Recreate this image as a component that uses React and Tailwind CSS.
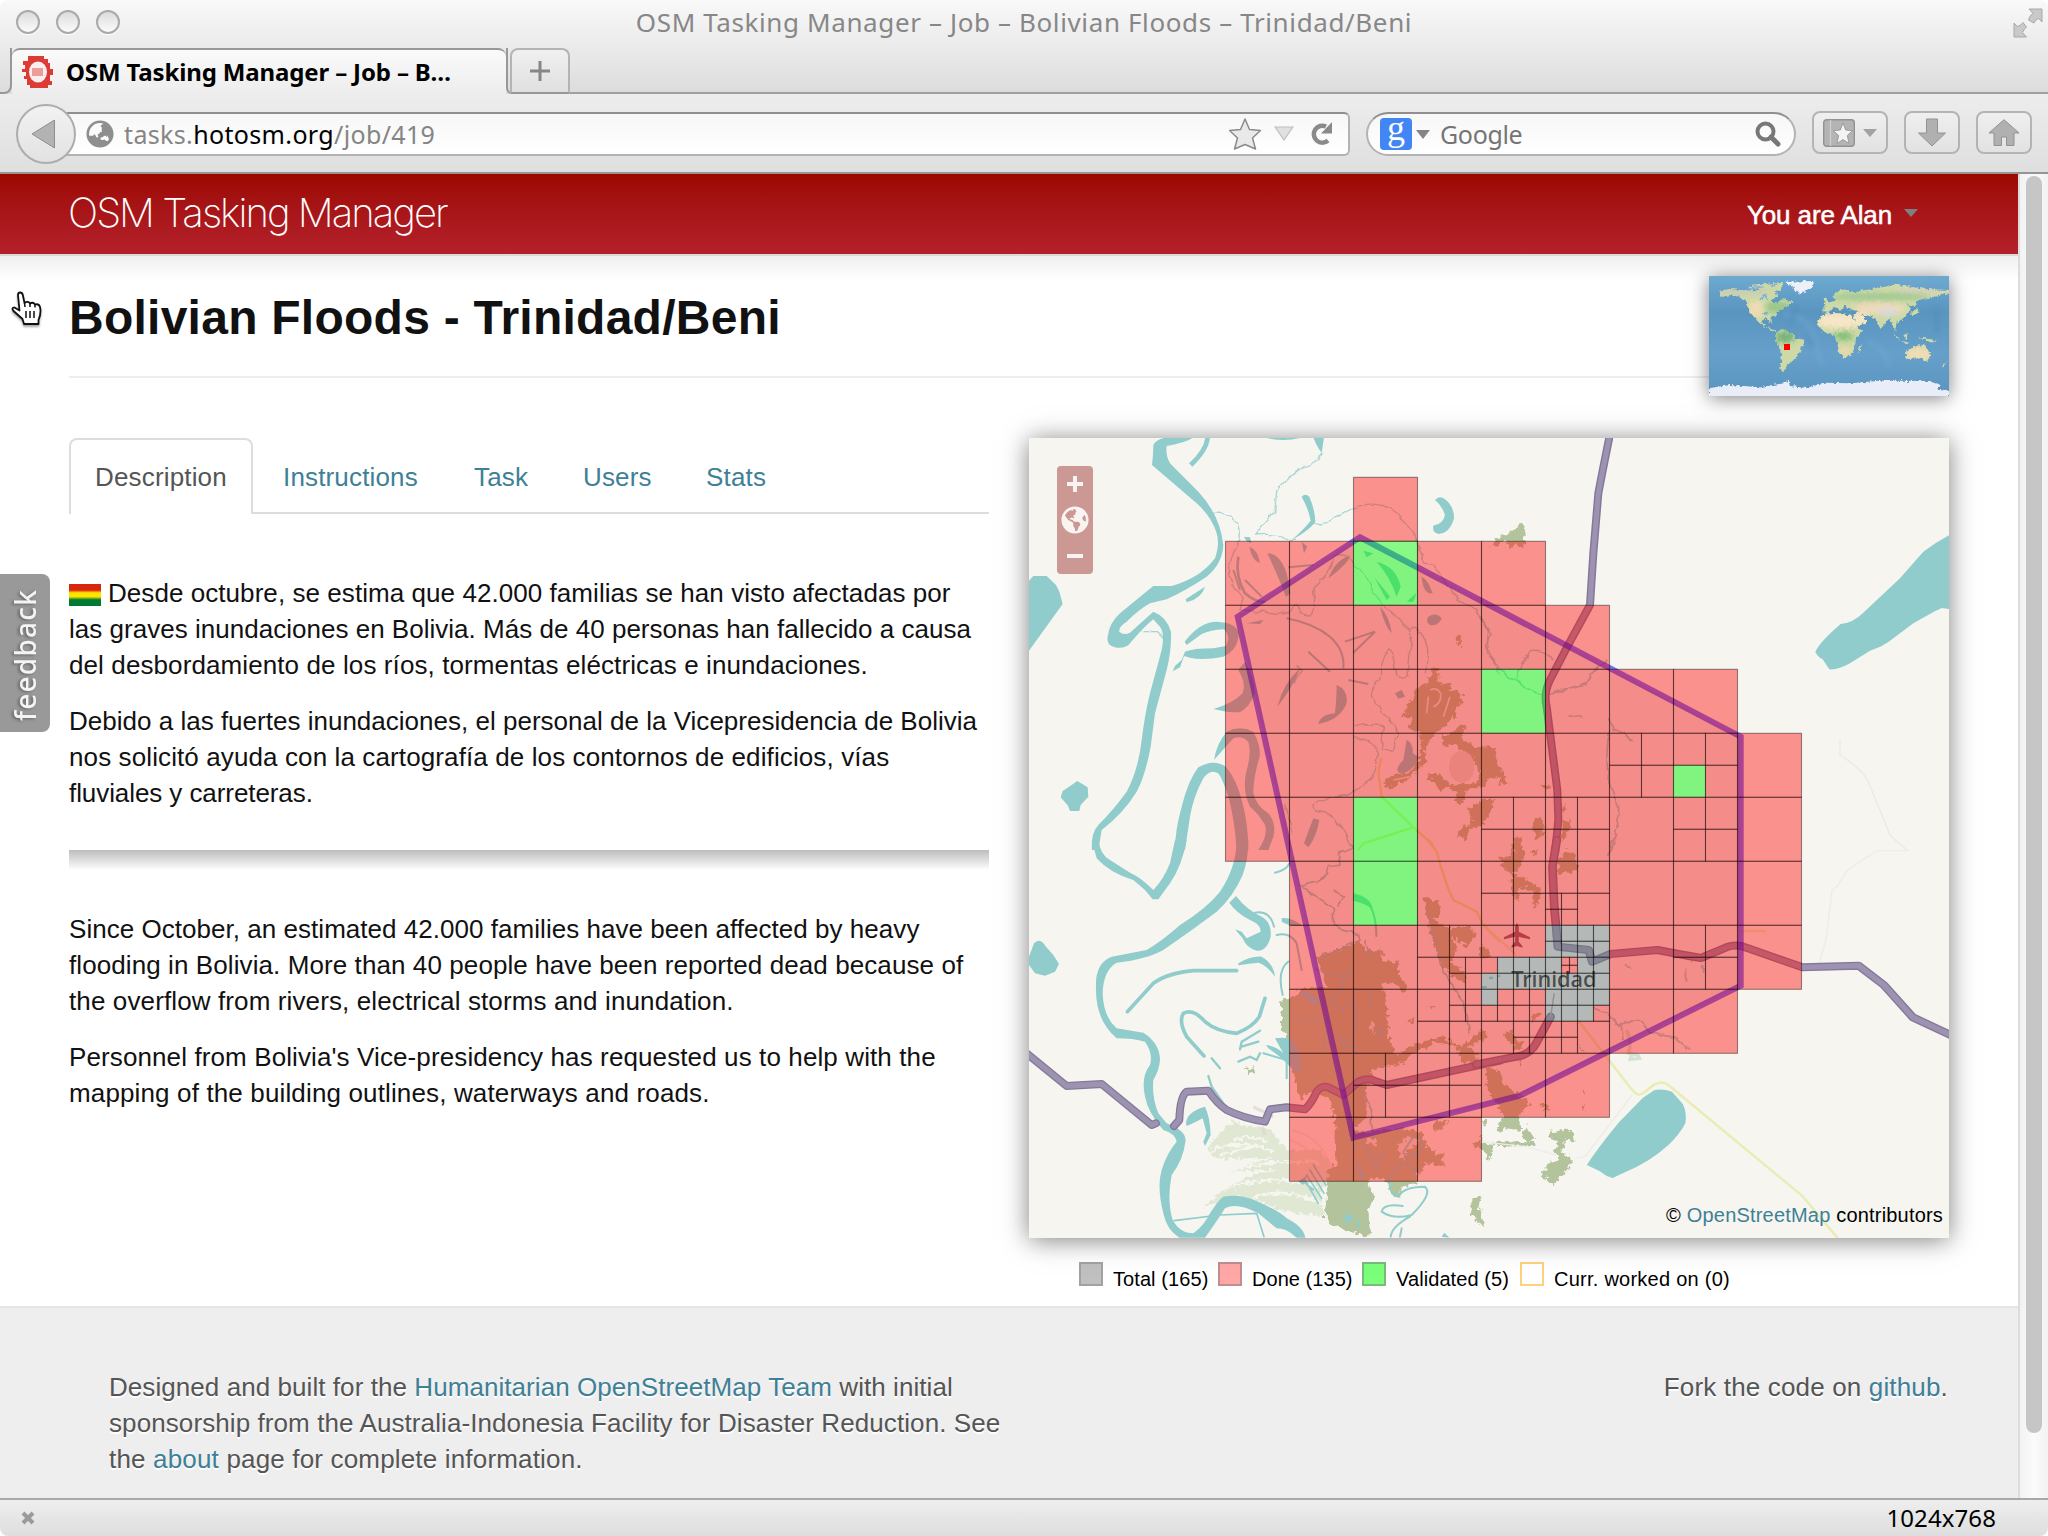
import React from "react";
import { FaGlobeAmericas, FaGlobeAsia } from "react-icons/fa";

const WATER = "#8fcccb";
const WOOD = "#b3c39c";
const ROAD = "#9d93b0";
const ROAD_EDGE = "#83799c";

/* ---------- task grid ---------- */
const X0 = 1225.5;
const Y0 = 477.3;
// each row: [first column, last column]
const ROWS = [[2, 2], [0, 4], [0, 5], [0, 7], [0, 8], [0, 8], [1, 8], [1, 8], [1, 7], [1, 5], [1, 3]];

// a cell is a state letter, or a list of four cells: upper left, upper right, lower left, lower right
const D = "d";
const V = "v";
const T = "t";
const Q = [D, D, D, D];
const G = [T, T, T, T];
const SPECIAL = {
  "1,2": V,
  "3,4": V,
  "4,6": Q,
  "4,7": [D, D, V, D],
  "5,2": V,
  "5,4": Q,
  "5,5": Q,
  "5,7": Q,
  "6,2": V,
  "6,4": Q,
  "6,5": [D, D, Q, D],
  "7,3": [D, D, D, Q],
  "7,4": [D, D, [D, T, T, T], G],
  "7,5": [G, G, [T, Q, T, T], G],
  "7,7": Q,
  "8,3": [D, Q, D, D],
  "8,4": [[T, D, D, D], Q, D, Q],
  "8,5": [G, [T, T, T, D], Q, D],
  "9,2": Q,
  "9,3": Q,
};

function split(cell, x, y, size, out) {
  if (typeof cell === "string") {
    out.push({ x, y, size, state: cell });
    return;
  }
  const h = size / 2;
  split(cell[0], x, y, h, out);
  split(cell[1], x + h, y, h, out);
  split(cell[2], x, y + h, h, out);
  split(cell[3], x + h, y + h, h, out);
}

const CELLS = [];
ROWS.forEach(([a, b], r) => {
  for (let c = a; c <= b; c++) split(SPECIAL[`${r},${c}`] || D, X0 + c * 64, Y0 + r * 64, 64, CELLS);
});

const FILL = {
  d: "rgba(255,8,5,0.42)",
  v: "rgba(0,255,0,0.45)",
  t: "rgba(113,123,121,0.45)",
};

const Road = ({ d, w = 20 }) => (
  <>
    <path d={d} fill="none" stroke={ROAD_EDGE} strokeWidth={w} strokeLinejoin="round" strokeLinecap="round" />
    <path d={d} fill="none" stroke={ROAD} strokeWidth={w - 8} strokeLinejoin="round" strokeLinecap="round" />
  </>
);

function NorthWest() {
  return (
    <g transform="translate(1020 430) scale(0.33333)">
      <g fill={WATER}>
        <path d="M27 452 L40 438 H80 L108 465 L118 485 L128 522 L27 662Z" />
        <path d="M172 1053 L203 1072 L205 1100 L182 1125 L178 1143 H150 L144 1127 L122 1102 L128 1083 L145 1072Z" />
        <path d="M400 45 Q408 28 440 22 H520 Q500 38 440 48 Q436 75 450 100 L535 185 Q600 255 610 345 Q608 400 560 440 Q500 480 440 508 L390 520 Q355 540 320 575 Q295 590 298 605 Q310 618 330 608 L400 545 Q440 560 453 605 Q455 660 440 720 L405 850 L392 950 Q375 1040 350 1085 Q310 1150 245 1200 L235 1260 H216 Q212 1210 235 1185 Q280 1140 320 1085 Q355 1020 365 930 Q375 850 390 790 L425 660 Q435 610 420 590 L400 568 Q372 590 330 640 Q320 655 290 653 Q255 648 264 615 Q268 580 300 550 L400 468 H455 Q540 445 585 385 Q600 340 590 310 Q575 260 530 220 L396 105 Q400 70 400 45Z" />
        <path d="M732 22 H848 Q790 38 732 22Z M880 22 H912 L905 68 Q890 50 880 22Z" />
        <path d="M845 200 Q855 188 868 200 Q885 240 886 275 Q870 300 815 330 Q850 300 872 272 Q865 235 845 200Z" />
        <path d="M1245 210 Q1258 195 1275 208 Q1303 230 1302 265 Q1290 310 1255 312 L1242 305 Q1235 285 1245 285 Q1270 280 1275 255 Q1265 225 1245 210Z" />
        <path d="M497 508 L555 470 Q545 505 500 517Z M494 635 Q540 575 590 575 Q650 578 656 610 Q655 660 610 680 Q550 692 510 683 L492 678 L480 712 L458 724 L465 708 L485 690 L495 665 Q520 655 580 655 L618 648 Q635 620 612 598 Q570 600 545 612 L500 645Z" />
        <path d="M580 837 Q640 820 668 790 Q680 760 655 720 L675 695 Q705 750 705 790 Q690 830 660 847 Q620 848 580 837Z" />
        <path d="M582 990 Q590 940 620 905 Q660 885 700 905 Q725 950 718 985 Q700 1040 700 1090 Q710 1130 745 1150 Q770 1180 760 1220 L745 1260 H715 Q745 1215 735 1185 Q715 1150 690 1130 Q665 1080 680 1020 Q695 970 685 935 Q665 915 640 925Z" />
        <path d="M465 1260 Q465 1200 485 1130 Q505 1050 535 1012 Q580 985 618 1010 Q650 1050 665 1110 Q685 1180 685 1260 H650 Q645 1180 628 1110 Q610 1050 595 1030 Q570 1015 550 1045 Q520 1100 510 1160 L495 1260Z" />
        <path d="M672 320 L690 322 L694 340 L680 334Z M742 370 Q780 370 800 430 L812 490 L798 500 Q775 440 742 370Z M845 335 L862 350 L852 370Z M950 765 Q985 780 980 820 Q960 870 895 882 Q900 855 945 850 Q950 800 950 765Z" />
        <path d="M1160 930 Q1180 940 1178 970 L1195 980 Q1180 1030 1140 1030 Q1120 1020 1150 990Z M880 1165 L898 1170 Q890 1220 865 1252 L852 1240Z M1225 560 Q1250 545 1265 565 Q1255 590 1230 585 Q1215 575 1225 560Z M1205 440 Q1225 450 1238 490 Q1210 495 1205 440Z M1125 790 L1145 780 L1155 800 L1135 806Z M1030 362 L1060 370 L1040 382Z M1070 395 Q1130 410 1142 470 L1130 500 Q1110 440 1070 395Z M1062 440 L1110 500 L1100 510Z M1160 515 L1190 488 L1180 515Z" />
        <path d="M688 350 Q715 360 720 400 Q695 390 688 350Z M925 445 Q950 385 990 378 Q985 400 925 445Z M772 830 Q790 760 840 715 Q820 770 772 830Z M680 580 L730 570 L720 582Z M1080 530 Q1110 560 1115 610 Q1095 590 1080 530Z" />
      </g>
      <g fill="none" stroke={WATER} strokeWidth="8">
        <path d="M563 22 Q560 60 512 105" strokeWidth="14" />
        <path d="M655 380 Q645 440 675 490 Q710 520 735 515" />
        <path d="M675 450 L725 500 M640 420 L660 480" strokeWidth="6" />
        <path d="M805 412 L880 405 M800 565 Q880 580 930 620 Q975 660 970 715 M865 665 L930 725 M975 635 L1065 605 L1000 668 M985 750 L1045 762" strokeWidth="6" />
      </g>
      <g fill="none" stroke={WATER} strokeWidth="4" opacity="0.75" filter="url(#wander)">
        <path d="M905 68 Q890 100 850 110 Q790 150 770 185 L765 240 L705 315 Q770 308 795 328 L830 328" />
        <path d="M578 250 Q640 245 655 290 Q665 330 640 370 Q615 430 645 480 L670 500 L660 540 L740 545 Q800 560 830 525 Q850 560 870 560 Q890 530 880 480 L930 420 L945 375 Q990 370 1000 400 Q1040 430 1060 490 Q1100 540 1140 570 Q1180 610 1175 640 Q1160 690 1165 735 Q1140 760 1125 720 Q1120 660 1105 660 Q1080 690 1085 740 Q1050 780 1055 800 Q1090 850 1110 870 L1135 910 L1120 965 L1085 955 L1090 895 L1075 885 L1000 885" />
        <path d="M880 280 L905 285 L1000 235 Q1060 205 1130 245 L1180 310 L1215 400 Q1250 400 1270 450 L1320 515 L1370 540 Q1385 580 1405 600 L1400 660 L1440 730" />
        <path d="M365 605 H410 L432 628 M1165 600 Q1190 580 1215 630 Q1235 680 1215 730 M1000 920 Q1060 930 1075 970 Q1070 1030 1050 1050 L985 1095 L900 1110 Q870 1125 890 1140 Q940 1150 970 1200 L1000 1255 M830 710 L845 720 L820 760 M790 1120 Q820 1170 810 1210" />
      </g>
      <g fill={WOOD} filter="url(#rough)">
        <path d="M1240 710 L1255 715 L1255 755 L1295 765 L1290 780 L1320 785 L1330 815 L1310 835 Q1300 870 1270 895 L1240 915 L1215 960 L1220 1000 L1190 1020 L1165 1050 L1130 1065 L1110 1078 L1085 1065 L1105 1040 L1165 1030 L1195 990 L1205 960 L1200 910 L1165 895 L1180 860 L1145 865 L1170 815 L1185 780 L1225 755Z" />
        <path d="M1325 880 L1335 895 L1320 925 L1370 950 L1425 955 L1430 990 L1440 1040 L1400 1050 L1390 1070 L1330 1085 L1335 1110 L1320 1125 L1305 1115 L1310 1085 L1285 1070 L1260 1080 L1240 1050 L1215 1050 L1225 1030 L1250 1030 L1290 1060 Q1345 1070 1375 1050 Q1385 1010 1350 980 L1305 945 L1268 950 L1265 915 L1290 915Z" />
        <path d="M1310 620 L1322 618 L1322 650 L1314 650Z M1345 1140 L1375 1120 L1420 1105 L1410 1150 L1385 1155 L1390 1185 L1350 1190 L1340 1230 L1310 1215 L1330 1190 L1360 1180Z" />
      </g>
      <ellipse cx="1325" cy="1010" rx="38" ry="48" fill="#e6e4dc" />
      <g fill="none" stroke="#f0eee4" strokeWidth="5">
        <path d="M1230 780 Q1250 770 1262 790 Q1265 820 1240 830 M1225 800 L1220 850 M1290 800 L1270 860 M1120 1050 L1170 1040" />
      </g>
      <path d="M1085 985 Q1070 1020 1080 1060 L1085 1100 L1180 1192 L1240 1245 M1180 1192 L1030 1240 L1015 1260" fill="none" stroke="#e9e9a0" strokeWidth="7" />
    </g>
  );
}

function NorthEast() {
  return (
    <g transform="translate(1480 430) scale(0.33333)">
      <path fill={WATER} d="M1410 314 Q1370 335 1330 365 L1260 445 L1150 548 Q1120 578 1082 582 Q1020 635 1006 665 Q1012 680 1028 688 L1048 718 Q1075 720 1110 700 L1170 662 Q1210 650 1240 625 L1300 580 Q1370 540 1385 534 L1410 537Z" />
      <g fill="none" stroke={WATER} strokeWidth="5" opacity="0.8" filter="url(#wander)">
        <path d="M0 560 L30 610 L20 650 L45 700 L85 745 L110 750 L140 775 L185 795 L230 785 L320 760 L335 730 L385 690 M110 745 Q115 710 155 662 Q190 655 220 690 M265 858 H308 M388 865 L400 900 L430 910 L455 930 M390 900 Q375 960 385 1040 L415 1130 Q420 1170 395 1260" />
      </g>
      <g fill={WOOD} filter="url(#rough)">
        <path d="M30 352 L45 330 L65 315 L90 310 L110 290 L130 282 L138 300 L130 330 L135 352 L110 345 L95 350 L75 335 L45 350Z" />
        <path d="M0 960 L35 950 L50 975 L45 1000 L75 1030 L85 1060 L55 1065 L60 1045 L35 1020 L20 1055 L0 1050Z M0 1110 L45 1105 L30 1130 L25 1165 L0 1180Z M160 1165 H188 V1220 L170 1230 L158 1200Z M245 1180 L272 1170 L262 1210 L245 1235Z M95 1260 L100 1230 L125 1220 L120 1260Z M175 1060 L215 1068 L200 1078Z M240 1130 L258 1120 L250 1150Z" />
      </g>
      <path d="M1080 930 V975 Q1150 1020 1165 1055 L1230 1215 L1280 1260" fill="none" stroke="#ebebe6" strokeWidth="4" />
      <path d="M388 22 Q370 110 355 190 L340 370 L330 525 L262 650 L210 750 Q190 790 200 830 L232 1080 L235 1170 L225 1270" fill="none" stroke={ROAD_EDGE} strokeWidth="24" />
      <path d="M388 22 Q370 110 355 190 L340 370 L330 525 L262 650 L210 750 Q190 790 200 830 L232 1080 L235 1170 L225 1270" fill="none" stroke={ROAD} strokeWidth="15" />
    </g>
  );
}

function SouthWest() {
  return (
    <g transform="translate(1020 840) scale(0.33333)">
      <g filter="url(#rough)">
        <path fill="#e0e8d3" d="M560 930 Q590 880 640 840 Q680 870 740 860 L770 890 L800 930 H905 L940 990 L900 1060 L912 1130 L780 1110 L700 1075 L640 1070 L550 1100 L600 1060 L680 1010 L780 985 L620 1000 L660 980 L760 955 L590 955Z" />
        <path fill="none" stroke="#f6f5f0" strokeWidth="8" d="M570 935 Q660 890 760 935 M600 945 L700 920 M620 998 Q720 960 900 965 M640 1040 Q760 1000 900 1040 M700 1070 Q800 1040 905 1090 M640 900 Q700 880 740 905" />
      </g>
      <g fill="none" stroke="#e9e6c6" strokeWidth="4" opacity="0.7">
        <path d="M810 900 Q870 920 905 980 M815 870 Q900 890 930 970 M815 930 Q850 950 870 1010" />
      </g>
      <g fill={WOOD} filter="url(#rough)">
        <path d="M783 485 L808 475 L850 445 L920 440 L890 350 L1020 305 L1040 330 L1090 335 L1085 360 L1130 365 L1135 400 L1165 445 L1150 458 L1120 430 L1085 430 L1100 500 L1105 590 L1130 645 L1200 605 L1270 592 L1320 620 L1390 570 L1400 590 L1345 620 L1375 640 L1370 670 L1320 665 L1310 620 L1250 605 L1180 640 L1160 665 L1060 690 L1040 740 L1040 830 L1000 870 L1060 880 L1080 990 L1040 1035 L1065 1070 L1045 1110 L1050 1185 L1030 1188 L945 1160 L915 1130 L920 1030 L925 990 L950 970 L945 840 L930 780 L880 750 L840 780 L820 690 L800 580 H783Z" />
        <path d="M1050 875 L1140 865 L1210 880 L1215 910 L1250 945 L1275 935 L1265 960 L1280 980 L1215 970 L1190 1000 L1190 1030 L1145 1040 L1140 1075 L1110 1060 L1105 1030 L1050 1000Z" />
        <path d="M675 688 L700 682 L702 694 L685 706Z M1355 1078 L1385 1070 L1375 1100 L1390 1155 L1365 1140 L1352 1110Z M1235 850 L1290 838 L1270 860 L1240 875Z" />
        <path d="M1210 170 L1260 190 L1265 225 L1240 235 L1280 265 L1345 260 L1370 280 L1345 320 L1295 290 L1310 330 L1290 370 L1330 390 L1340 430 L1310 420 L1290 400 L1260 370 L1235 300 L1225 240Z" />
        <path d="M1375 330 L1405 325 L1410 350 L1385 352Z M1225 500 L1245 498 L1240 508Z M1160 545 L1185 530 L1180 545Z" />
        <path d="M1360 905 L1420 915 L1415 960 L1395 935 L1365 920Z M1385 840 L1405 835 L1395 860Z M1400 690 H1440 V740 L1410 735Z" />
      </g>
      <g fill="#f6f5f0" filter="url(#rough)">
        <path d="M1040 900 L1070 895 L1072 915 L1045 910Z M1130 915 L1170 890 L1200 905 L1160 935 L1150 960Z M1045 560 L1060 540 L1065 580Z" opacity="0.8" />
      </g>
      <g fill={WATER}>
        <path d="M215 0 H236 Q240 45 270 60 L330 98 Q360 110 400 150 Q430 120 450 70 L465 0 H500 Q485 80 450 130 L415 178 H398 L375 150 L340 120 Q270 100 230 55Z" />
        <path d="M650 0 H685 Q685 60 668 105 Q640 170 590 215 Q510 275 430 330 Q380 358 290 368 Q250 390 248 460 Q250 530 290 565 L370 578 Q420 610 420 660 Q418 690 400 720 Q395 770 415 820 L440 850 Q495 870 497 900 Q490 960 455 1005 Q440 1080 458 1140 Q480 1180 520 1180 Q550 1160 570 1120 Q595 1080 610 1070 Q660 1060 715 1085 Q780 1115 800 1135 Q850 1160 856 1193 H830 Q800 1165 770 1165 L715 1120 Q650 1085 615 1105 Q590 1145 555 1193 H478 Q440 1170 430 1120 Q410 1040 425 990 Q440 940 470 905 Q465 880 430 870 Q385 820 375 770 Q362 710 390 675 Q400 640 375 605 Q340 595 290 595 Q225 540 228 440 Q225 370 275 350 L380 330 Q430 300 480 255 Q560 205 600 155 Q650 80 650 0Z" />
        <path d="M27 350 L42 310 Q60 290 78 320 L100 345 L117 372 L105 395 L75 407 L45 400 L27 375Z" />
        <path d="M628 188 L648 168 Q680 210 725 230 Q755 245 752 290 Q740 335 710 332 Q680 325 668 295 L645 268 L665 275 L680 295 L722 275 Q725 255 690 240 Q650 220 628 188Z" />
        <path d="M655 370 Q690 348 725 350 Q760 370 765 410 Q740 375 715 368 Q690 370 655 376Z M785 235 Q810 230 850 258 Q810 260 785 245Z" />
        <path d="M498 850 Q500 815 555 800 Q570 830 572 885 L555 918 L550 905 L560 880 L548 835 Q520 850 500 858Z M738 615 Q770 620 790 640 L765 595 Q800 590 815 600 Q850 640 840 690 L830 700 L780 650 L745 625Z M1265 1190 L1273 1178 L1288 1193Z" />
        <path d="M835 1025 L862 1005 L850 1035Z M1000 160 Q1050 170 1058 205 L1052 205 Q1040 192 1000 182Z M840 455 Q890 455 900 495 Q870 500 840 455Z M945 570 L985 620 L975 625Z M1075 560 L1088 580 L1078 598Z M1010 960 L1035 1010 L1020 1020Z M975 1130 L990 1120 L1000 1140 L975 1150Z M1012 1130 L1022 1160 H1012Z" />
      </g>
      <g fill="none" stroke={WATER} strokeLinecap="round">
        <path d="M322 515 L400 430 Q440 400 520 392 L650 392" strokeWidth="11" />
        <path d="M552 648 L500 590 Q475 545 490 520 Q520 505 555 545 Q590 575 650 580 Q700 560 718 530 L735 475" strokeWidth="11" />
        <path d="M1050 195 Q1070 235 1069 288" strokeWidth="6" />
        <path d="M660 628 L665 605 L720 572 M665 620 L715 605 M655 665 L690 650 L710 660 L720 640 M575 655 L600 685 M565 708 L575 740 L610 790" strokeWidth="7" />
        <path d="M705 218 Q750 210 762 260 M770 285 Q810 275 830 310 L845 390 M805 365 Q770 390 788 465 M765 98 Q800 90 808 70 M730 640 L800 660 L800 715" strokeWidth="6" />
        <path d="M462 1142 L600 1125 L710 1120 L732 1190 M855 1020 L895 1090 M860 1005 L905 1075 M870 990 L912 1060 M880 975 L918 1035 M845 1020 L880 1050" strokeWidth="5" />
        <path d="M1108 1010 Q1105 1065 1135 1070 Q1150 1040 1215 1040 Q1240 1060 1175 1125 Q1120 1140 1085 1115 Q1090 1090 1148 1098 M1170 1130 Q1115 1160 1112 1190 M1145 1165 L1140 1190" strokeWidth="6" />
        <path d="M1110 1010 Q1130 970 1150 965 L1200 1000 M1150 940 Q1200 960 1205 920 Q1200 880 1180 890 L1150 935 M1030 900 L1070 985 L1085 940" strokeWidth="6" opacity="0.8" />
      </g>
      <g fill="none" stroke={WATER} strokeWidth="5" opacity="0.85" filter="url(#wander)">
        <path d="M1000 20 L955 40 L960 75 L925 80 Q925 130 840 135 L940 205 L940 250 Q960 275 1015 280 L1020 300 L900 355 M1035 300 L1050 350 M1225 220 Q1240 300 1270 390 L1330 490 L1350 580 M890 390 L960 410 L985 400 L960 450 L935 480 L960 510 L1000 480 L1010 550 L990 600 L1010 640 M940 150 L970 170 L955 200 M835 545 Q900 535 925 560 L905 630 M1055 455 L1050 500 M1000 700 L1050 800 L1060 900" />
      </g>
      <path d="M1225 0 L1250 35 Q1275 130 1300 180 L1370 215 L1390 255 L1440 305" fill="none" stroke="#e9e9a0" strokeWidth="7" />
      <path d="M725 860 L735 885 M700 800 L760 830" stroke="#ddd0d0" strokeWidth="10" opacity="0.6" />
      <Road w={24} d="M20 640 L140 738 L245 732 L395 855 L408 850" />
      <Road w={24} d="M462 858 L478 840 Q480 770 500 755 L565 752 Q590 790 620 810 Q670 835 735 845 L750 808 L800 802 L855 808 Q875 790 890 755 Q905 735 925 742 L970 765 L1015 725 Q1045 710 1070 725 L1100 735 L1440 662" />
    </g>
  );
}

function SouthEast() {
  return (
    <g transform="translate(1480 840) scale(0.36224 0.33333)">
      <g fill={WOOD} filter="url(#rough)">
        <path d="M50 55 L95 40 L95 0 L118 20 L120 50 L110 80 L85 105 L70 85Z M140 35 L160 30 L155 50Z M240 30 L262 35 L270 95 L215 100 L215 60Z M90 100 L125 115 L165 145 L165 190 L145 200 L145 150 L110 140 L105 185 L85 150Z" />
        <path d="M0 570 L20 575 L10 600 L0 605Z M65 580 L88 570 L100 600 L120 610 L110 635 L95 625Z M0 318 L15 320 L28 345 L0 352Z M145 520 L165 525 L145 548Z" />
        <path d="M20 665 L35 695 L60 705 L65 730 L100 760 L140 790 L120 810 L100 835 L115 870 L70 865 L60 880 L45 870 L65 830 L50 800 L20 745 L15 700Z M125 855 L140 880 L155 890 L130 910 L120 890Z M195 870 L215 880 L240 865 L262 880 L260 910 L235 895 L225 930 L255 960 L240 995 L215 1020 L200 1035 L190 1015 L162 1008 L185 985 L190 965 L220 960 L205 930 L215 905 L190 895Z" />
        <path d="M0 885 L10 905 L0 930Z M20 930 L35 945 L25 960 L15 955Z M165 790 L190 800 L178 812Z M285 745 L292 760 L285 765Z M280 800 L292 795 L288 815Z M270 610 L285 640 L278 640Z M100 640 L118 660 L108 680Z" />
        <path d="M35 905 L110 908 L150 905 V915 L50 918Z M0 1110 L8 1155 L0 1150Z" />
      </g>
      <path d="M405 570 Q420 610 410 640 L435 645 L440 655 L415 658 L420 640" fill="none" stroke="#c9dcc4" strokeWidth="10" opacity="0.7" />
      <g fill={WATER}>
        <path d="M482 750 Q505 745 530 755 L560 792 Q572 820 567 850 Q550 885 520 915 Q470 965 400 997 L366 1014 L350 1008 L330 993 L295 975 L310 950 Q350 890 385 845 L450 773Z" />
        <path d="M25 410 H36 V417 H25Z M5 438 H18 V445 H5Z M50 405 h6 v6 h-6z" />
      </g>
      <path d="M315 505 L350 520 L385 560 L400 545 L440 542 L470 575 L540 595 L580 628 M390 560 L395 600 M365 0 L355 50 M400 370 L418 388 M570 380 L570 425 M585 355 V370 M615 375 V398" fill="none" stroke={WATER} strokeWidth="5" opacity="0.8" filter="url(#wander)" />
      <path d="M0 245 L100 345 M270 540 L420 750 Q436 772 452 758 L482 733 Q505 722 520 735 L890 1068 L988 1195 M715 273 H790" fill="none" stroke="#e9edb4" strokeWidth="7" />
      <path d="M420 765 L290 950 L260 955 M0 905 L130 920 L210 945 M1145 0 L1182 32 H1095 L1015 90 L985 140 L972 150 L955 300 L935 375" fill="none" stroke="#ececea" strokeWidth="4" />
      <Road w={24} d="M212 0 L200 80 L205 200 L215 320 L300 330 L310 365 L360 342 L490 330 Q560 345 610 354 L680 322 Q710 310 740 325 L890 382 L1045 377 L1115 435 L1195 532 L1305 588" />
      <Road w={24} d="M-10 673 L110 648 Q140 640 155 610 L195 530" />
      <path d="M195 530 L205 460" stroke="#b9a5ae" strokeWidth="4" />
      <path d="M102 248 L107 260 V275 L138 292 V298 L107 290 V305 L117 318 V323 L102 318 L87 323 V318 L97 305 V290 L66 298 V292 L97 275 V260Z" fill="#8a6a78" />
      <text x="204" y="442" textAnchor="middle" textLength="236" lengthAdjust="spacingAndGlyphs" fontFamily="Noto Sans, sans-serif" fontSize="66" fontWeight="500" fill="#2d2926" stroke="#f6f5f0" strokeOpacity="0.35" strokeWidth="8" paintOrder="stroke">
        Trinidad
      </text>
    </g>
  );
}

function TaskMap() {
  return (
    <svg className="block h-full w-full" viewBox="1029 438 920 800">
      <defs>
        <filter id="rough" x="-5%" y="-5%" width="110%" height="110%">
          <feTurbulence type="fractalNoise" baseFrequency="0.07" numOctaves="2" seed="4" result="n" />
          <feDisplacementMap in="SourceGraphic" in2="n" scale="26" xChannelSelector="R" yChannelSelector="G" />
        </filter>
        <filter id="wander" x="-5%" y="-5%" width="110%" height="110%">
          <feTurbulence type="fractalNoise" baseFrequency="0.05" numOctaves="1" seed="9" result="n" />
          <feDisplacementMap in="SourceGraphic" in2="n" scale="18" xChannelSelector="R" yChannelSelector="G" />
        </filter>
      </defs>
      <rect x="1029" y="438" width="920" height="800" fill="#f6f5f0" />
      <SouthWest />
      <NorthWest />
      <NorthEast />
      <SouthEast />
      <path
        d="M1237.7 616.7 L1360 537.3 L1740.7 736.7 V985.7 L1519.8 1095.7 L1353.3 1137.7Z"
        fill="rgba(0,30,60,0.04)"
        stroke="rgba(0,0,255,0.55)"
        strokeWidth="6"
      />
      {CELLS.map((c, i) => (
        <rect key={i} x={c.x} y={c.y} width={c.size} height={c.size} fill={FILL[c.state]} stroke="rgba(0,0,0,0.42)" strokeWidth="1.1" />
      ))}
    </svg>
  );
}

function WorldMap() {
  return (
    <svg className="block h-full w-full" viewBox="537 528 720 360">
      <defs>
        <linearGradient id="sea" x1="0" y1="0" x2="0" y2="1">
          <stop offset="0" stopColor="#6ea9d0" />
          <stop offset="0.3" stopColor="#5a95c0" />
          <stop offset="0.65" stopColor="#659fca" />
          <stop offset="1" stopColor="#5a95bf" />
        </linearGradient>
        <filter id="coast" x="-5%" y="-5%" width="110%" height="110%">
          <feTurbulence type="fractalNoise" baseFrequency="0.1" numOctaves="2" seed="7" result="n" />
          <feDisplacementMap in="SourceGraphic" in2="n" scale="16" xChannelSelector="R" yChannelSelector="G" result="d" />
          <feGaussianBlur in="d" stdDeviation="2.200" />
        </filter>
        <filter id="softer"><feGaussianBlur stdDeviation="8" /></filter>
        <clipPath id="land">
          <path d="M568 572 L600 568 L650 572 L700 570 L735 572 L745 590 L722 600 L732 612 L760 598 L790 606 L768 622 L745 632 L738 645 L722 652 L722 668 L708 655 L695 662 L702 680 L722 684 L738 692 L725 692 L698 678 L682 662 L655 630 L650 605 L630 590 L600 585 L575 592Z" />
          <path d="M738 700 L755 686 L775 695 L795 705 L800 715 L826 720 L815 745 L805 765 L785 785 L772 795 L760 817 L750 808 L755 770 L750 745 L738 725Z" />
          <path d="M870 650 L890 640 L930 640 L965 648 L975 665 L985 688 L1000 690 L978 715 L975 745 L960 765 L942 776 L928 760 L920 725 L912 702 L878 695 L863 675Z" />
          <path d="M880 622 L880 637 L895 638 L910 620 L930 632 L945 618 L965 630 L985 632 L970 645 L980 680 L1012 665 L996 640 L1035 655 L1052 690 L1065 668 L1080 655 L1095 695 L1100 668 L1122 655 L1142 630 L1130 612 L1150 618 L1165 600 L1212 590 L1257 580 L1257 570 L1190 568 L1100 554 L1040 565 L970 575 L930 568 L905 590 L920 600 L895 608Z" />
          <path d="M1125 757 L1150 738 L1185 735 L1202 765 L1190 786 L1165 775 L1130 777Z" />
          <path d="M655 560 L690 552 L760 548 L750 575 L700 572Z M985 740 L995 735 L988 758Z M1092 700 L1112 722 L1100 715Z M1120 705 L1135 700 L1130 722Z M1165 710 L1220 722 L1205 728Z M1232 800 L1250 782 L1242 800Z M1140 640 L1165 625 L1170 635 L1150 648Z M1112 722 L1140 728 L1130 732Z M882 600 L892 595 L895 612 L884 615Z" />
        </clipPath>
      </defs>
      <rect x="537" y="528" width="720" height="360" fill="url(#sea)" />
      <g filter="url(#softer)" fill="none" strokeWidth="14" opacity="0.35">
        <path d="M760 640 Q830 650 850 700 Q860 760 880 800 M1010 720 Q1060 740 1080 800" stroke="#78b1d8" />
        <path d="M800 620 L780 670 M850 740 L830 700 M1220 620 V700" stroke="#4a86b2" />
      </g>
      <g filter="url(#coast)">
        <g clipPath="url(#land)">
          <rect x="537" y="528" width="720" height="360" fill="#cdd9a6" />
          <g filter="url(#softer)">
            <ellipse cx="765" cy="712" rx="30" ry="18" fill="#78b47c" />
            <ellipse cx="940" cy="708" rx="30" ry="14" fill="#86bf7c" />
            <ellipse cx="925" cy="662" rx="68" ry="24" fill="#f6e5c6" />
            <ellipse cx="995" cy="660" rx="25" ry="22" fill="#f6e5c6" />
            <ellipse cx="1050" cy="625" rx="80" ry="18" fill="#eedab9" />
            <ellipse cx="1075" cy="636" rx="32" ry="12" fill="#dcd8dc" />
            <ellipse cx="1050" cy="590" rx="150" ry="12" fill="#a3c993" />
            <ellipse cx="1180" cy="570" rx="90" ry="8" fill="#d6d2bd" />
            <ellipse cx="745" cy="622" rx="40" ry="20" fill="#9cc78b" />
            <ellipse cx="678" cy="628" rx="24" ry="26" fill="#eedcb4" />
            <ellipse cx="630" cy="572" rx="90" ry="14" fill="#cbcdb4" />
            <ellipse cx="1165" cy="762" rx="40" ry="20" fill="#f0dcb6" />
            <ellipse cx="945" cy="755" rx="22" ry="14" fill="#e8d8ae" />
          </g>
        </g>
        <path d="M765 545 L855 543 L842 565 L805 585 L790 560Z" fill="#eef0f7" />
        <path d="M537 865 L600 855 L690 862 L760 850 L775 838 L780 858 L830 864 L880 848 L960 850 L1050 842 L1200 843 L1232 855 L1225 866 L1257 872 V900 H537Z" fill="#e9edf7" />
        <path d="M690 600 L705 585 L715 600 M655 565 L700 560 M720 560 L745 552 M700 640 L712 642" stroke="#7fb2d4" strokeWidth="6" fill="none" />
      </g>
      <rect x="762" y="732" width="18" height="18" fill="#f00" />
    </svg>
  );
}

const Light = () => (
  <span className="size-6 rounded-full border-2 border-[#a9a9a9] bg-linear-to-b from-[#dcdcdc] to-[#fbfbfb] shadow-[0_1px_0_#fff]" />
);

const ToolButton = ({ className, children }) => (
  <span className={`flex h-[43px] shrink-0 items-center justify-center rounded-lg border-2 border-[#b4b4b4] bg-linear-to-b from-[#efefef] to-[#e2e2e2] ${className}`}>
    {children}
  </span>
);

const A = ({ children }) => <a className="text-[#3e8096]">{children}</a>;

function Chrome() {
  return (
    <div className="h-[174px] shrink-0 font-['Noto_Sans','Open_Sans',sans-serif]">
      <div className="flex h-[94px] flex-col rounded-t-lg bg-linear-to-b from-[#f9f9f9] to-[#dcdcdc]">
        <div className="flex h-[48px] shrink-0 items-start">
          <div className="flex w-[300px] gap-4 pt-[10px] pl-4">
            <Light /><Light /><Light />
          </div>
          <div className="flex-1 pt-[4px] text-center text-[26px] leading-[36px] tracking-[0.620px] text-[#878787]">
            OSM Tasking Manager – Job – Bolivian Floods – Trinidad/Beni
          </div>
          <div className="flex w-[300px] justify-end pt-[8px] pr-[5px]">
            <svg className="h-[30px] w-[30px]" viewBox="0 0 30 30" fill="#c9c9c9" stroke="#a9a9a9" strokeWidth="1">
              <path d="M16 1 H29 V14 L25.500 10.500 Q22 12 21 15 L15.500 12 Q16 8 20 5.500Z" />
              <path d="M1 15 L4.500 18.500 Q8 17.500 10 14.500 L13.500 19 Q11 21 9.500 24.500 L13.500 29 H1Z" />
            </svg>
          </div>
        </div>
        <div className="flex h-[46px] items-end">
          <div className="h-[46px] w-[12px] rounded-br-lg border-r-2 border-b-2 border-[#989898]" />
          <div className="flex h-[46px] w-[494px] items-center rounded-t-lg border-t-2 border-[#989898] bg-linear-to-b from-[#fafafa] to-[#ededed] pl-[10px]">
            <svg className="h-[32px] w-[32px] shrink-0" viewBox="0 0 32 32">
              <path d="M6 0 H22 V3 H26 V7 H28 V13 H31 V19 H28 V25 H30 V29 H26 V32 H8 V29 H5 V23 H2 V20 H4 V16 H0 V13 H3 V9 H1 V5 H6Z" fill="#dc3b36" />
              <ellipse cx="16" cy="16" rx="9" ry="10.500" fill="#fbeeee" />
              <rect x="10" y="12" width="11" height="8" fill="#eb9d9a" />
            </svg>
            <span className="ml-[12px] text-[24px] leading-[32px] font-bold tracking-[-0.140px] whitespace-nowrap text-black">
              OSM Tasking Manager – Job – B…
            </span>
          </div>
          <div className="mr-[-2px] h-[46px] w-[6px] rounded-bl-lg border-b-2 border-l-2 border-[#989898]" />
          <div className="flex h-[46px] w-[60px] items-center justify-center rounded-t-lg border-2 border-b-[#989898] border-[#b4b4b4] bg-linear-to-b from-[#f0f0f0] to-[#e0e0e0]">
            <svg className="size-5" viewBox="0 0 20 20" fill="#868686">
              <path d="M8.500 0 h3 v8.500 h8.500 v3 h-8.500 v8.500 h-3 v-8.500 h-8.500 v-3 h8.500z" />
            </svg>
          </div>
          <div className="h-[46px] flex-1 border-b-2 border-[#a0a0a0]" />
        </div>
      </div>
      <div className="flex h-[80px] items-start border-b-2 border-[#959595] bg-linear-to-b from-[#ededed] to-[#dfdfdf] pl-4">
        <div className="z-10 mt-[10px] flex size-[60px] shrink-0 items-center justify-center rounded-full border-2 border-[#adadad] bg-linear-to-b from-[#f2f2f2] to-[#e2e2e2]">
          <svg className="mr-[6px] h-[28px] w-[24px]" viewBox="0 0 24 28">
            <path d="M1 14 L23.500 0 V28Z" fill="#b3b3b3" stroke="#8d8d8d" strokeWidth="1" />
          </svg>
        </div>
        <div className="mt-[18px] -ml-[10px] flex h-[44px] w-[1284px] items-center rounded-r-md border-2 border-t-[#8f8f8f] border-[#b3b3b3] bg-linear-to-b from-[#f7f7f7] to-white pl-[18px]">
          <FaGlobeAsia className="size-7 text-[#8e8e8e]" />
          <span className="ml-[10px] text-[25px] leading-[36px] tracking-[0.350px] text-[#858585]">
            tasks.<span className="text-black">hotosm.org</span>/job/419
          </span>
          <svg className="mr-[13px] ml-auto h-[32px] w-[32px]" viewBox="0 0 32 32">
            <path d="M16 1 L20.500 11.500 L31.500 12.500 L23.500 20 L26.500 31 L16 26.500 L5.500 31 L8.500 20 L0.500 12.500 L11.500 11.500Z" fill="#e9e9e9" stroke="#8a8a8a" strokeWidth="1.500" strokeLinejoin="round" />
          </svg>
          <svg className="mr-[15px] h-[16px] w-[20px]" viewBox="0 0 20 16">
            <path d="M1 1 H19 L10 14Z" fill="#e0e0e0" stroke="#bdbdbd" strokeWidth="1.200" />
          </svg>
          <svg className="mr-[15px] h-[24px] w-[24px]" viewBox="0 0 24 24">
            <path d="M17 4.500 A8.500 8.500 0 1 0 19 18.500" fill="none" stroke="#8a8a8a" strokeWidth="4.500" />
            <path d="M23 0 V11.500 H12Z" fill="#8a8a8a" />
          </svg>
        </div>
        <div className="mt-[18px] ml-[16px] flex h-[44px] w-[430px] items-center rounded-full border-2 border-t-[#8f8f8f] border-[#b3b3b3] bg-linear-to-b from-[#f7f7f7] to-white pl-[12px]">
          <span className="flex size-8 items-start justify-center rounded-sm bg-[#4285f4] font-['Liberation_Serif',serif] text-[36px] leading-[21px] text-white">g</span>
          <svg className="ml-[4px] h-[9px] w-[14px]" viewBox="0 0 14 9">
            <path d="M0 0 H14 L7 9Z" fill="#858585" />
          </svg>
          <span className="ml-[10px] text-[25px] leading-[36px] tracking-[-0.350px] text-[#757575]">Google</span>
          <svg className="mr-[13px] ml-auto h-[26px] w-[26px]" viewBox="0 0 26 26" fill="none" stroke="#787878">
            <circle cx="10.500" cy="10.500" r="8" strokeWidth="4" />
            <path d="M16 16 L23 23" strokeWidth="5" strokeLinecap="round" />
          </svg>
        </div>
        <ToolButton className="mt-[17px] ml-[16px] w-[76px]">
          <svg className="h-[28px] w-[32px]" viewBox="0 0 32 28">
            <rect x="0.700" y="0.700" width="30.600" height="26.600" rx="3" fill="#b4b4b4" stroke="#929292" strokeWidth="1.400" />
            <path d="M7.500 1 V27" stroke="#cfcfcf" strokeWidth="1.200" />
            <path d="M20 4 L22.700 11 L29.500 11.700 L24.300 16.500 L26 24.500 L20 20.500 L14 24.500 L15.700 16.500 L10.500 11.700 L17.300 11Z" fill="#f4f4f4" stroke="#8f8f8f" strokeWidth="0.800" />
          </svg>
          <svg className="ml-[8px] h-[8px] w-[14px]" viewBox="0 0 14 8">
            <path d="M0 0 H14 L7 8Z" fill="#a2a2a2" />
          </svg>
        </ToolButton>
        <ToolButton className="mt-[17px] ml-[16px] w-[56px]">
          <svg className="h-[29px] w-[28px]" viewBox="0 0 28 29">
            <path d="M8.500 1 H19.500 V15 H27.500 L14 28 L0.500 15 H8.500Z" fill="#b0b0b0" stroke="#929292" strokeWidth="1" />
          </svg>
        </ToolButton>
        <ToolButton className="mt-[17px] ml-[16px] w-[56px]">
          <svg className="h-[27px] w-[32px]" viewBox="0 0 32 27">
            <path d="M16 0.700 L31 14 H26 V26.500 H18.500 V18 H13.500 V26.500 H6 V14 H1Z" fill="#b0b0b0" stroke="#929292" strokeWidth="1" />
          </svg>
        </ToolButton>
      </div>
    </div>
  );
}

const TABS = [
  { label: "Instructions", gap: "ml-[30px] w-[137px]" },
  { label: "Task", gap: "ml-[54px] w-[54px]" },
  { label: "Users", gap: "ml-[55px] w-[68px]" },
  { label: "Stats", gap: "ml-[55px] w-[62px]" },
];

const LEGEND = [
  { label: "Total (165)", box: "border-[#a2a2a2] bg-[#c0c0c0]", text: "w-[96px]" },
  { label: "Done (135)", box: "border-[#bf8e8e] bg-[#ffa6a6]", text: "w-[101px] tracking-[0.050px]" },
  { label: "Validated (5)", box: "border-[#7abb7a] bg-[#7bff7b]", text: "w-[115px]" },
  { label: "Curr. worked on (0)", box: "border-[#fdd27c] bg-white", text: "w-[180px] tracking-[0.250px]" },
];

const Line = ({ t, children }) => <span className={`block ${t}`}>{children}</span>;

function Page() {
  return (
    <div className="relative flex w-[2018px] flex-col overflow-hidden bg-white font-['Liberation_Sans',Arial,sans-serif] text-[26px] leading-[36px] tracking-[-0.120px] text-[#111]">
      <header className="flex h-[82px] shrink-0 items-start justify-between border-b-2 border-[#d9d9d9] bg-linear-to-b from-[#9c0800] to-[#b5212b] bg-origin-border pr-[100px] pl-[68px]">
        <span className="mt-[14px] font-['Inter',sans-serif] text-[40px] leading-[50px] font-extralight tracking-[-1.980px] whitespace-nowrap text-white">
          OSM Tasking Manager
        </span>
        <span className="mt-[23px] flex items-center whitespace-nowrap text-white [-webkit-text-stroke:0.500px_white]">
          You are Alan
          <svg className="mt-[-4px] ml-[12px] h-[8px] w-[14px]" viewBox="0 0 14 8">
            <path d="M0 0 H14 L7 8Z" fill="#7f8080" />
          </svg>
        </span>
      </header>
      <div className="h-[24px] shrink-0 bg-linear-to-b from-[#efefef] to-white" />
      <div className="mx-[69px] flex h-[98px] shrink-0 items-start justify-between border-b-2 border-[#eee]">
        <h1 className="mt-[2px] text-[48px] leading-[72px] font-bold tracking-[0.250px] whitespace-nowrap">Bolivian Floods - Trinidad/Beni</h1>
        <div className="z-10 mt-[-4px] h-[120px] w-[240px] shrink-0 shadow-[0_2px_18px_rgba(0,0,0,0.5)]">
          <WorldMap />
        </div>
      </div>

      <main className="mx-[69px] mt-[60px] flex h-[868px] shrink-0 justify-between">
        <div className="w-[920px]">
          <nav className="flex h-[76px] tracking-[0.160px]">
            <span className="w-[184px] rounded-t-lg border-2 border-b-0 border-[#ddd] pt-[19px] pl-[24px] text-[#555]">Description</span>
            <div className="flex flex-1 border-b-2 border-[#ddd] pt-[21px] whitespace-nowrap">
              {TABS.map((t) => (
                <a key={t.label} className={`text-[#3e8096] ${t.gap}`}>{t.label}</a>
              ))}
            </div>
          </nav>
          <div className="mt-[61px] whitespace-nowrap">
            <p className="mb-[20px]">
              <Line t="tracking-[0.060px]">
                <span className="mr-[7px] inline-block h-[22px] w-[32px] bg-[linear-gradient(#d8260e_28%,#f0720a_33%,#fbe400_40%,#fbe400_58%,#8fb010_64%,#007a33_72%)] align-[-4px]" />
                Desde octubre, se estima que 42.000 familias se han visto afectadas por
              </Line>
              <Line t="tracking-[0.020px]">las graves inundaciones en Bolivia. Más de 40 personas han fallecido a causa</Line>
              <Line t="tracking-[0.100px]">del desbordamiento de los ríos, tormentas eléctricas e inundaciones.</Line>
            </p>
            <p>
              <Line t="tracking-[0.010px]">Debido a las fuertes inundaciones, el personal de la Vicepresidencia de Bolivia</Line>
              <Line t="tracking-[0.110px]">nos solicitó ayuda con la cartografía de los contornos de edificios, vías</Line>
              <Line t="tracking-[-0.080px]">fluviales y carreteras.</Line>
            </p>
            <div className="mt-[39px] mb-[41px] h-[20px] bg-linear-to-b from-[#bdbdbd] to-white" />
            <p className="mb-[20px]">
              <Line t="tracking-[0.035px]">Since October, an estimated 42.000 families have been affected by heavy</Line>
              <Line t="tracking-[0.090px]">flooding in Bolivia. More than 40 people have been reported dead because of</Line>
              <Line t="tracking-[0.120px]">the overflow from rivers, electrical storms and inundation.</Line>
            </p>
            <p>
              <Line t="tracking-[0.110px]">Personnel from Bolivia's Vice-presidency has requested us to help with the</Line>
              <Line t="tracking-[0.140px]">mapping of the building outlines, waterways and roads.</Line>
            </p>
          </div>
        </div>

        <div className="w-[920px]">
          <div className="relative h-[800px] shadow-[0_2px_24px_rgba(0,0,0,0.5)]">
            <TaskMap />
            <div className="absolute top-[28px] left-[28px] flex h-[108px] w-[36px] flex-col items-center rounded-sm bg-[#cb9894] text-[#f9f4f2]">
              <svg className="mt-[10px] size-4" viewBox="0 0 16 16" fill="currentColor"><path d="M6 0h4v6h6v4h-6v6h-4v-6h-6v-4h6z" /></svg>
              <FaGlobeAmericas className="mt-[14px] size-7" />
              <span className="mt-[20px] h-1 w-4 bg-[#f9f4f2]" />
            </div>
            <div className="absolute right-[6px] bottom-[8px] text-[20px] leading-[30px] tracking-[0.190px] whitespace-nowrap text-black">
              © <A>OpenStreetMap</A> contributors
            </div>
          </div>
          <div className="mt-[24px] flex items-start pl-[50px] text-[20px] leading-[34px] tracking-[0.080px] whitespace-nowrap text-black">
            {LEGEND.map((l) => (
              <React.Fragment key={l.label}>
                <span className={`mr-[10px] size-6 shrink-0 border-2 ${l.box}`} />
                <span className={`mr-[9px] ${l.text}`}>{l.label}</span>
              </React.Fragment>
            ))}
          </div>
        </div>
      </main>

      <footer className="flex flex-1 items-start justify-between border-t-2 border-[#e5e5e5] bg-[#eee] pt-[61px] pr-[70px] pl-[109px] whitespace-nowrap text-[#555] [text-shadow:0_2px_0_#fff]">
        <p>
          <Line t="tracking-[0.065px]">Designed and built for the <A>Humanitarian OpenStreetMap Team</A> with initial</Line>
          <Line t="tracking-[0.090px]">sponsorship from the Australia-Indonesia Facility for Disaster Reduction. See</Line>
          <Line t="tracking-[0.170px]">the <A>about</A> page for complete information.</Line>
        </p>
        <p className="tracking-[0.160px]">Fork the code on <A>github</A>.</p>
      </footer>

      <div className="absolute top-[400px] left-0 flex h-[158px] w-[50px] items-center justify-center rounded-r-lg bg-[#999]">
        <span className="mt-[4px] rotate-180 font-['Noto_Sans',sans-serif] text-[28px] leading-[36px] font-medium tracking-[1.200px] text-[#f4f4f4] [text-shadow:-1px_-2px_3px_#666] [writing-mode:vertical-rl]">feedback</span>
      </div>
      <svg className="absolute top-[117px] left-[10px] h-[38px] w-[34px] drop-shadow-[0_2px_1px_rgba(0,0,0,0.35)]" viewBox="0 0 34 38">
        <path d="M8 4 Q8 1.500 10 1.500 Q12.300 1.500 12.800 4 L14.500 12 Q18 9.500 20 12.500 Q23 10.500 25 13.500 Q29 12.500 30 16 Q31.500 22 28.500 29 V33 H14 L12.500 28 L3.500 20 Q1 16.500 4.500 16.500 L9.500 19.500Z" fill="#fff" stroke="#111" strokeWidth="1.800" strokeLinejoin="round" />
        <path d="M16 20 V27 M20 20 V27 M24 20 V27 M14.500 12 L15 16 M20 12.500 V16 M25 13.500 V16.500" stroke="#111" strokeWidth="1.500" />
      </svg>
    </div>
  );
}

export default function App() {
  return (
    <div className="flex h-[1536px] w-[2048px] flex-col overflow-hidden bg-white">
      <Chrome />
      <div className="flex h-[1324px] shrink-0">
        <Page />
        <div className="w-[30px] border-l-2 border-[#dcdcdc] bg-linear-to-r from-[#f2f2f2] via-[#fbfbfb] to-[#f2f2f2] pt-[2px] pl-[6px]">
          <div className="h-[1257px] w-[16px] rounded-full bg-[#c6c6c6]" />
        </div>
      </div>
      <div className="flex h-[38px] shrink-0 items-center justify-between rounded-b-lg border-t-2 border-[#a8a8a8] bg-linear-to-b from-[#eee] to-[#dedede] pr-[52px] pl-[20px] font-['Noto_Sans',sans-serif]">
        <svg className="size-4" viewBox="0 0 16 16">
          <path d="M3 3 L13 13 M13 3 L3 13" stroke="#9a9a9a" strokeWidth="4" />
        </svg>
        <span className="text-[24px] leading-[32px] tracking-[0.100px] text-black">1024x768</span>
      </div>
    </div>
  );
}
